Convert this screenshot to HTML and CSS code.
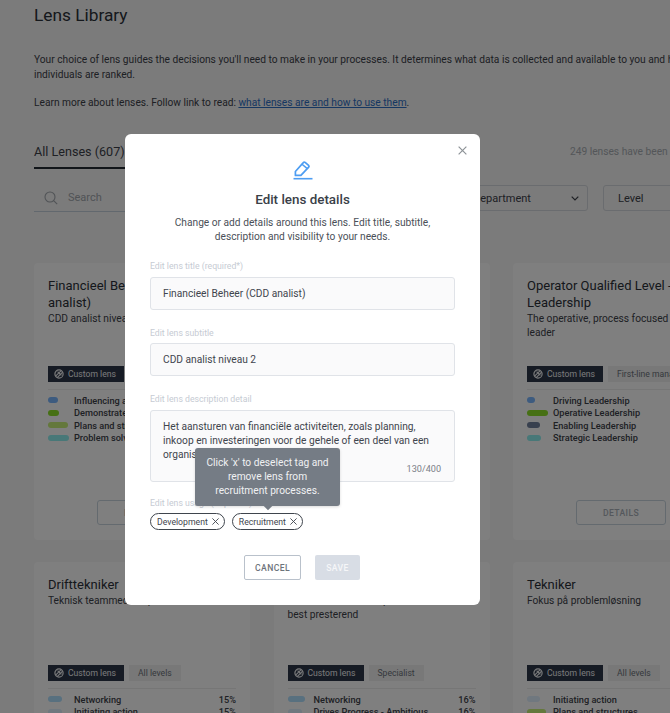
FILE: index.html
```html
<!DOCTYPE html>
<html lang="en">
<head>
    <meta charset="UTF-8">
    <meta name="viewport" content="width=device-width, initial-scale=1.0">
    <title>Lens Library</title>
    <link rel="stylesheet" href="styles.css">
</head>
<body>
    <svg class="icon-defs" width="0" height="0">
        <symbol id="lens-icon" viewBox="0 0 10 10">
            <circle cx="5" cy="5" r="4.1" fill="none" stroke="currentColor" stroke-width="1.2"/>
            <path d="M1.6 7.2 7.2 1.6M3.2 8.6 8.6 3.2M3.6 2.6l3.8 3.8" fill="none" stroke="currentColor" stroke-width="1.1"/>
        </symbol>
    </svg>

    <div class="page">
        <h1 class="page-title">Lens Library</h1>
        <p class="intro">Your choice of lens guides the decisions you'll need to make in your processes. It determines what data is collected and available to you and how individuals are ranked.</p>
        <p class="intro learn">Learn more about lenses. Follow link to read: <a href="#">what lenses are and how to use them</a>.</p>

        <div class="tabs">
            <div class="tab-active">All Lenses (607)</div>
            <div class="tab-note">249 lenses have been customised</div>
        </div>

        <div class="filters">
            <div class="search">
                <svg width="14" height="14" viewBox="0 0 14 14"><circle cx="6" cy="6" r="5" fill="none" stroke="currentColor" stroke-width="1.1"/><path d="m9.6 9.6 3.6 3.6" stroke="currentColor" stroke-width="1.1"/></svg>
                <span>Search</span>
            </div>
            <div class="select select-dept">
                <span>Department</span>
                <svg width="8" height="5" viewBox="0 0 8 5"><path d="m.7.7 3.3 3.3L7.3.7" fill="none" stroke="currentColor" stroke-width="1.2"/></svg>
            </div>
            <div class="select select-level"><span>Level</span></div>
        </div>

        <div class="cards">
            <div class="card">
                <div class="card-head">
                    <h3>Financieel Beheer (CDD analist)</h3>
                    <p>CDD analist niveau 2</p>
                </div>
                <div class="tags"><span class="tag-dark"><svg width="10" height="10"><use href="#lens-icon"/></svg>Custom lens</span><span class="tag-light">Manager</span></div>
                <ul class="traits">
                    <li><span class="bar-cell"><i class="bar c-blue w-10"></i></span><b>Influencing and networking</b></li>
                    <li><span class="bar-cell"><i class="bar c-green w-11"></i></span><b>Demonstrates expertise</b></li>
                    <li><span class="bar-cell"><i class="bar c-lime w-20"></i></span><b>Plans and structures</b></li>
                    <li><span class="bar-cell"><i class="bar c-teal w-21"></i></span><b>Problem solving</b></li>
                </ul>
                <div class="card-foot"><span class="btn-details">DETAILS</span></div>
            </div>
            <div class="card">
                <div class="card-head">
                    <h3>Financieel Controller</h3>
                    <p>Verantwoordelijk voor de financiën</p>
                </div>
                <div class="tags"><span class="tag-dark"><svg width="10" height="10"><use href="#lens-icon"/></svg>Custom lens</span></div>
                <div class="card-foot"><span class="btn-details">DETAILS</span></div>
            </div>
            <div class="card">
                <div class="card-head">
                    <h3>Operator Qualified Level - Leadership</h3>
                    <p>The operative, process focused team leader</p>
                </div>
                <div class="tags"><span class="tag-dark"><svg width="10" height="10"><use href="#lens-icon"/></svg>Custom lens</span><span class="tag-light">First-line manager</span></div>
                <ul class="traits">
                    <li><span class="bar-cell"><i class="bar c-blue w-8"></i></span><b>Driving Leadership</b></li>
                    <li><span class="bar-cell"><i class="bar c-green w-21"></i></span><b>Operative Leadership</b></li>
                    <li><span class="bar-cell"><i class="bar c-slate w-13"></i></span><b>Enabling Leadership</b></li>
                    <li><span class="bar-cell"><i class="bar c-teal w-14"></i></span><b>Strategic Leadership</b></li>
                </ul>
                <div class="card-foot"><span class="btn-details">DETAILS</span></div>
            </div>

            <div class="card">
                <div class="card-head">
                    <h3>Drifttekniker</h3>
                    <p>Teknisk teammedlem på drift</p>
                </div>
                <div class="tags"><span class="tag-dark"><svg width="10" height="10"><use href="#lens-icon"/></svg>Custom lens</span><span class="tag-light">All levels</span></div>
                <ul class="traits">
                    <li><span class="bar-cell"><i class="bar c-sky w-14"></i></span><b>Networking</b><em>15%</em></li>
                    <li><span class="bar-cell"><i class="bar c-pale w-14"></i></span><b>Initiating action</b><em>15%</em></li>
                </ul>
            </div>
            <div class="card">
                <div class="card-head">
                    <h3>Tekniker</h3>
                    <p>Teknisk teamlid die op elk niveau<br>best presterend</p>
                </div>
                <div class="tags"><span class="tag-dark"><svg width="10" height="10"><use href="#lens-icon"/></svg>Custom lens</span><span class="tag-light">Specialist</span></div>
                <ul class="traits">
                    <li><span class="bar-cell"><i class="bar c-sky w-17"></i></span><b>Networking</b><em>16%</em></li>
                    <li><span class="bar-cell"><i class="bar c-pale w-14"></i></span><b>Drives Progress - Ambitious</b><em>16%</em></li>
                </ul>
            </div>
            <div class="card">
                <div class="card-head">
                    <h3>Tekniker</h3>
                    <p>Fokus på problemløsning</p>
                </div>
                <div class="tags"><span class="tag-dark"><svg width="10" height="10"><use href="#lens-icon"/></svg>Custom lens</span><span class="tag-light">All levels</span></div>
                <ul class="traits">
                    <li><span class="bar-cell"><i class="bar c-pale w-13"></i></span><b>Initiating action</b></li>
                    <li><span class="bar-cell"><i class="bar c-lime w-19"></i></span><b>Plans and structures</b></li>
                </ul>
            </div>
        </div>
    </div>

    <div class="overlay">
        <div class="modal">
            <svg class="modal-close" width="9" height="9" viewBox="0 0 10 10"><path d="m.7.7 8.6 8.6M9.3.7.7 9.3" stroke="currentColor" stroke-width="1.3"/></svg>
            <svg class="modal-icon" width="20" height="20" viewBox="0 0 20 20"><path d="M2.4 15.4v-3.9L10.3 2.6a1.3 1.3 0 0 1 1.8-.2l3.5 3a1.3 1.3 0 0 1 .1 1.8L7.9 15.4z" fill="none" stroke="currentColor" stroke-width="1.7" stroke-linejoin="round"/><path d="m9 4.2 5 4.2" stroke="currentColor" stroke-width="1.5"/><path d="M.5 18.7h19" stroke="currentColor" stroke-width="1.6"/></svg>
            <h2>Edit lens details</h2>
            <p class="modal-text">Change or add details around this lens. Edit title, subtitle, description and visibility to your needs.</p>

            <label class="field-label label-first">Edit lens title (required*)</label>
            <div class="field">Financieel Beheer (CDD analist)</div>

            <label class="field-label">Edit lens subtitle</label>
            <div class="field field-second">CDD analist niveau 2</div>

            <label class="field-label">Edit lens description detail</label>
            <div class="field field-area">
                Het aansturen van financiële activiteiten, zoals planning, inkoop en investeringen voor de gehele of een deel van een organisatie.
                <span class="counter">130/400</span>
            </div>

            <label class="field-label label-usage">Edit lens usage (required*)</label>
            <div class="chips">
                <span class="chip">Development <svg width="7" height="7" viewBox="0 0 7 7"><path d="m.4.4 6.2 6.2M6.6.4.4 6.6" stroke="currentColor" stroke-width=".9"/></svg></span>
                <span class="chip">Recruitment <svg width="7" height="7" viewBox="0 0 7 7"><path d="m.4.4 6.2 6.2M6.6.4.4 6.6" stroke="currentColor" stroke-width=".9"/></svg></span>
            </div>

            <div class="modal-actions">
                <button class="btn-cancel">CANCEL</button>
                <button class="btn-save" disabled>SAVE</button>
            </div>

            <div class="tooltip">Click 'x' to deselect tag and<br>remove lens from<br>recruitment processes.</div>
        </div>
    </div>
</body>
</html>
```

FILE: styles.css
```css
* {
    box-sizing: border-box;
}
html, body {
    margin: 0;
    height: 100%;
    overflow: hidden;
}
body {
    font-family: Roboto, "Noto Sans", sans-serif;
    font-size: 11px;
    color: #3c4149;
    background-color: #f6f6f6;
}
.icon-defs {
    display: block;
}

/* page behind the modal */
.page {
    width: 760px;
    padding: 5px 0 0 34px;
}
.page-title {
    margin: 0;
    font-size: 17.3px;
    line-height: 20px;
    font-weight: 400;
    color: #2b3038;
}
.intro {
    width: 660px;
    margin: 27px 0 0;
    font-size: 10.2px;
    line-height: 15px;
}
.learn {
    margin-top: 13px;
}
.intro a {
    color: #2d6fc4;
}
.tabs {
    display: flex;
    margin-top: 28px;
    height: 31px;
}
.tab-active {
    width: 92px;
    font-size: 12.6px;
    line-height: 27px;
    white-space: nowrap;
    border-bottom: 2px solid #232a33;
}
.tab-note {
    margin-left: 444px;
    padding-top: 8px;
    font-size: 10.2px;
    color: #a8adb3;
    white-space: nowrap;
}
.filters {
    display: flex;
    margin-top: 15px;
    height: 28px;
}
.search {
    width: 300px;
    display: flex;
    align-items: center;
    gap: 10px;
    padding-left: 10px;
    color: #a2a7ad;
    border-bottom: 1px solid #c4d0dc;
}
.select {
    height: 26px;
    margin-top: 1px;
    display: flex;
    align-items: center;
    justify-content: space-between;
    padding: 0 8px 0 12px;
    border: 1px solid #d5d9de;
    border-radius: 3px;
}
.select-dept {
    width: 128px;
    margin-left: 126px;
}
.select-level {
    width: 100px;
    margin-left: 15px;
    padding-left: 14px;
}
.cards {
    display: grid;
    grid-template-columns: repeat(3, 216px);
    gap: 22px 23.5px;
    margin-top: 51px;
}
.card {
    height: 277px;
    padding: 14px;
    background-color: #ffffff;
    border-radius: 4px;
    display: flex;
    flex-direction: column;
}
.card-head {
    height: 89px;
}
.card-head h3 {
    margin: 0;
    padding-right: 8px;
    font-size: 13px;
    line-height: 17px;
    font-weight: 400;
    color: #2b3038;
}
.card-head p {
    margin: 1px 0 0;
    font-size: 10.2px;
    line-height: 14px;
}
.tags {
    display: flex;
    gap: 5px;
    padding-bottom: 7px;
    border-bottom: 1px solid #ececec;
}
.tag-dark {
    width: 76px;
    height: 16px;
    flex: none;
    display: flex;
    align-items: center;
    gap: 4px;
    padding-left: 6px;
    font-size: 8.6px;
    color: #f3f4f6;
    background-color: #2c3648;
    white-space: nowrap;
}
.tag-light {
    height: 16px;
    padding: 0 9px;
    display: flex;
    align-items: center;
    font-size: 8.6px;
    color: #6c7279;
    background-color: #f0f1f1;
    white-space: nowrap;
}
.traits {
    list-style: none;
    margin: 4px 0 0;
    padding: 0;
}
.traits li {
    height: 12.5px;
    display: flex;
    align-items: center;
    font-size: 9.2px;
}
.bar-cell {
    width: 26px;
    flex: none;
    display: flex;
}
.traits b {
    font-weight: 500;
    white-space: nowrap;
}
.traits em {
    margin-left: auto;
    font-style: normal;
    font-weight: 500;
}
.bar {
    height: 6px;
    border-radius: 3px;
}
.w-8 { width: 8px; }
.w-10 { width: 10px; }
.w-11 { width: 11px; }
.w-13 { width: 13px; }
.w-14 { width: 14px; }
.w-17 { width: 17px; }
.w-19 { width: 19px; }
.w-20 { width: 20px; }
.w-21 { width: 21px; }
.c-blue { background-color: #7bb7ff; }
.c-green { background-color: #8ce028; }
.c-lime { background-color: #c8f078; }
.c-teal { background-color: #90f0f0; }
.c-slate { background-color: #70809c; }
.c-sky { background-color: #b0e0ff; }
.c-pale { background-color: #e0f0ff; }
.card-foot {
    margin-top: auto;
    display: flex;
    justify-content: center;
    padding-bottom: 1px;
}
.btn-details {
    width: 90px;
    height: 25px;
    display: flex;
    align-items: center;
    justify-content: center;
    border: 1px solid #c9d5df;
    border-radius: 3px;
    font-size: 8.6px;
    font-weight: 500;
    letter-spacing: .4px;
    color: #aab1b9;
}

/* modal */
.overlay {
    position: fixed;
    inset: 0;
    padding: 134px 0 0 125px;
    background-color: rgba(0, 0, 0, .5);
    backdrop-filter: blur(.4px);
}
.modal {
    position: relative;
    width: 355px;
    height: 471px;
    padding: 26px 25px 0;
    background-color: #ffffff;
    border-radius: 6px;
    display: flex;
    flex-direction: column;
}
.modal-close {
    position: absolute;
    top: 12px;
    right: 13px;
    color: #8d9297;
}
.modal-icon {
    align-self: center;
    flex: none;
    color: #4d9df2;
}
.modal h2 {
    margin: 10px 0 0;
    text-align: center;
    font-size: 13.4px;
    line-height: 20px;
    font-weight: 500;
    color: #3a4048;
}
.modal-text {
    margin: 6px 0 0;
    text-align: center;
    font-size: 10.2px;
    line-height: 14px;
    color: #4a5058;
}
.field-label {
    margin-top: 17px;
    font-size: 8.7px;
    line-height: 12px;
    color: #c6cbd3;
}
.label-first {
    margin-top: 16px;
}
.field {
    margin-top: 5px;
    height: 33px;
    flex: none;
    padding: 0 12px;
    display: flex;
    align-items: center;
    font-size: 10.2px;
    color: #3f454d;
    background-color: #fafafb;
    border: 1px solid #e0e3e8;
    border-radius: 3px;
}
.field-second {
    margin-top: 4px;
}
.field-area {
    position: relative;
    display: block;
    height: 72px;
    padding-top: 9px;
    line-height: 14px;
}
.counter {
    position: absolute;
    right: 13px;
    bottom: 5px;
    font-size: 9.1px;
    color: #7b8087;
}
.label-usage {
    margin-top: 15px;
}
.chips {
    display: flex;
    gap: 7px;
    margin-top: 4px;
}
.chip {
    height: 17px;
    padding: 0 5px 0 6px;
    display: flex;
    align-items: center;
    gap: 4px;
    font-size: 8.7px;
    color: #3f454d;
    border: 1px solid #3f454d;
    border-radius: 9px;
    white-space: nowrap;
}
.modal-actions {
    display: flex;
    justify-content: center;
    gap: 14px;
    margin-top: 25px;
    padding-right: 1px;
}
.modal-actions button {
    height: 25px;
    padding: 0;
    font-family: inherit;
    font-size: 8.6px;
    font-weight: 500;
    letter-spacing: .4px;
    border-radius: 2px;
}
.btn-cancel {
    width: 57px;
    color: #6d737b;
    background-color: #ffffff;
    border: 1px solid #b9c1cb;
}
.btn-save {
    width: 45px;
    color: #f5f6f8;
    background-color: #d8dde5;
    border: none;
}
.tooltip {
    position: absolute;
    left: 70px;
    top: 314px;
    width: 145px;
    height: 58px;
    padding-top: 8px;
    text-align: center;
    font-size: 10.2px;
    line-height: 14px;
    color: #f0f1f3;
    background-color: #757c85;
    border-radius: 3px;
    box-shadow: 0 1px 3px rgba(0, 0, 0, .15);
}
.tooltip::after {
    content: "";
    position: absolute;
    left: 70px;
    bottom: -3px;
    width: 6px;
    height: 6px;
    background-color: #757c85;
    transform: rotate(45deg);
}
```
